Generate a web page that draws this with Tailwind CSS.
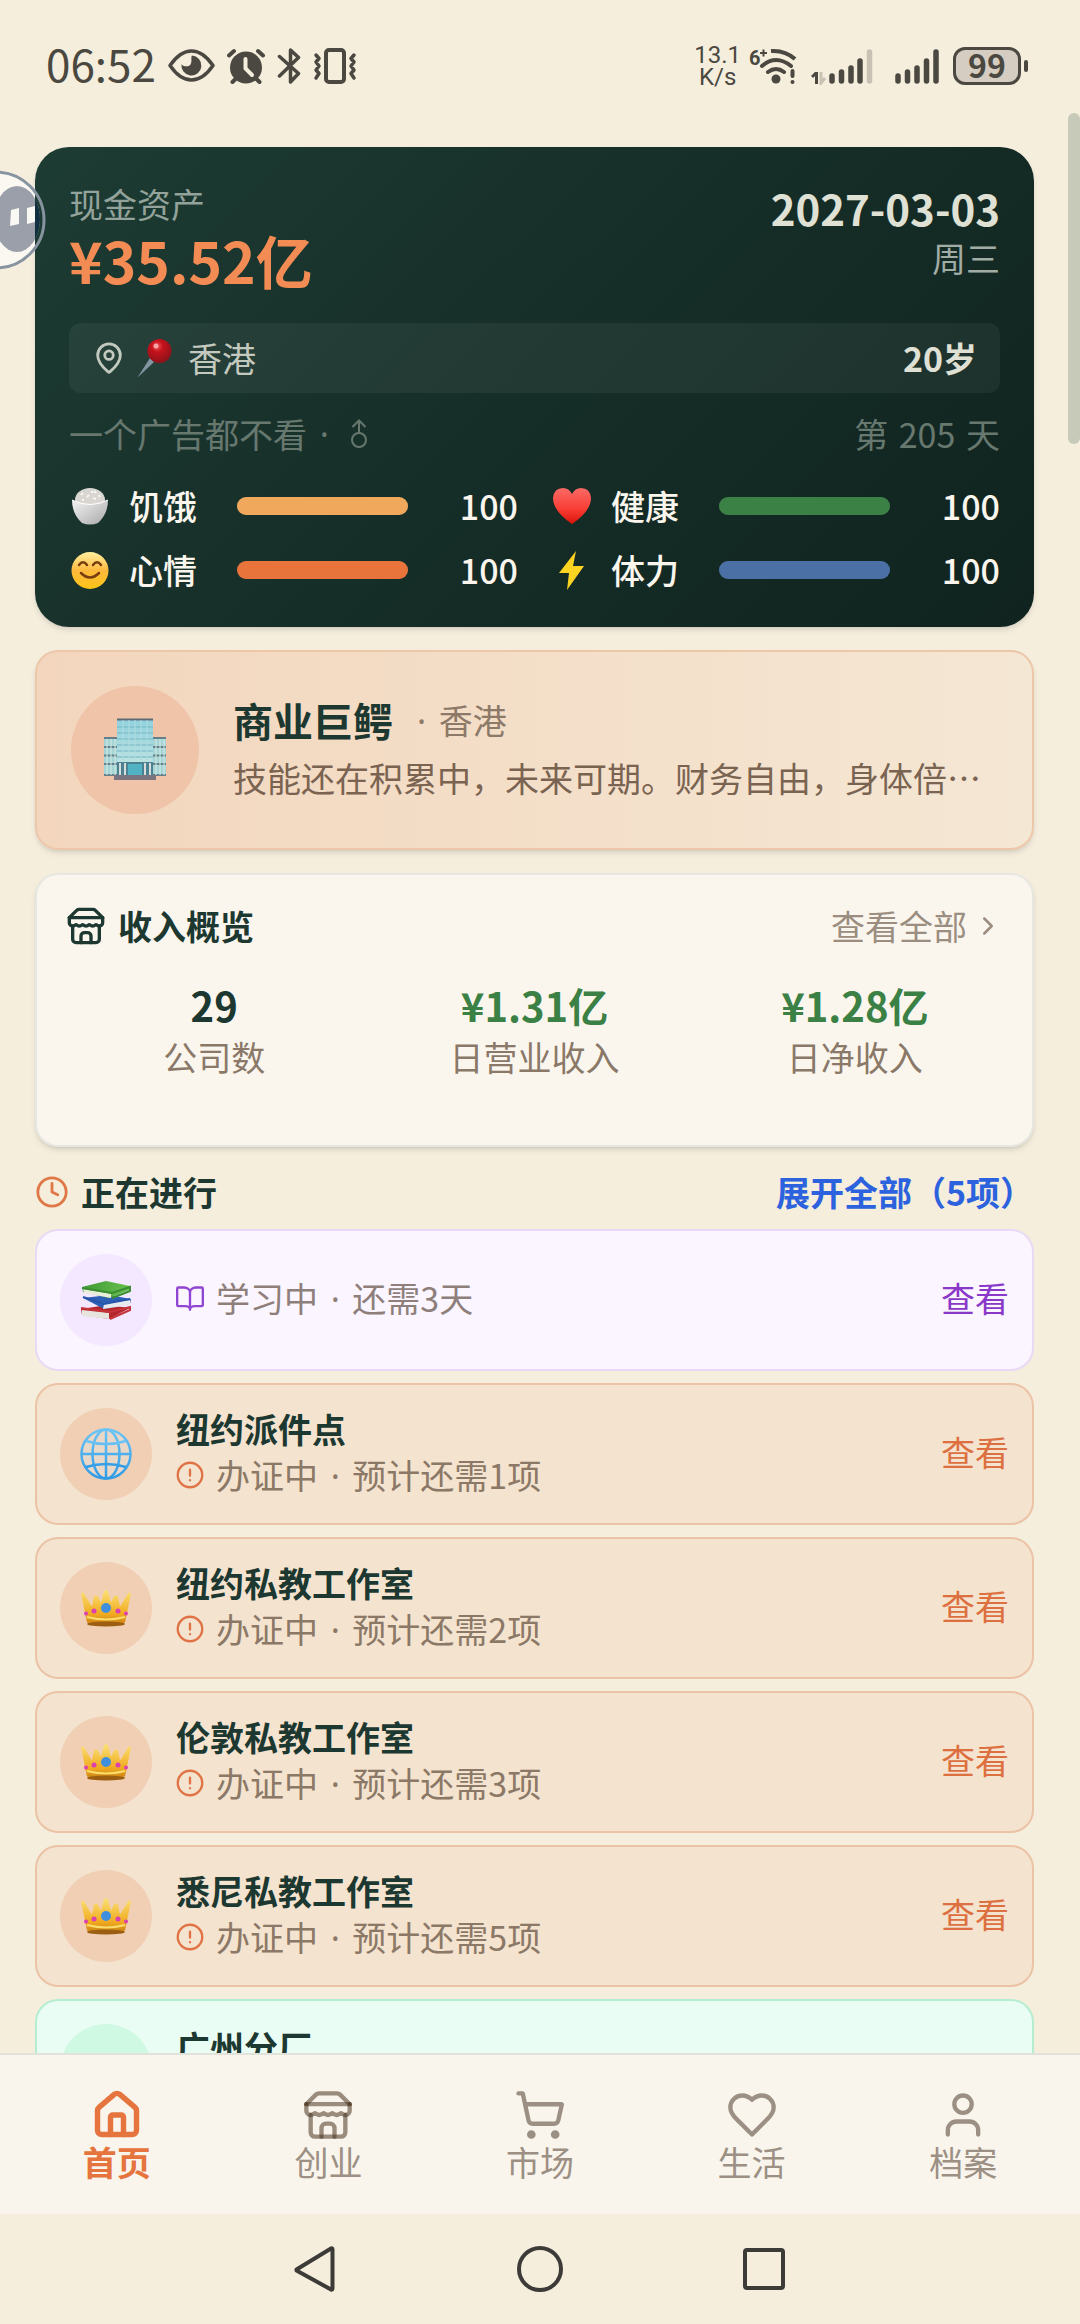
<!DOCTYPE html>
<html lang="zh-CN">
<head>
  <meta charset="UTF-8">
  <meta name="viewport" content="width=device-width, initial-scale=1.0">
  <title>首页</title>
  <script src="https://cdn.jsdelivr.net/npm/@tailwindcss/browser@4"></script>
</head>
<body class="bg-[#f5eedd] text-[#1c3830] font-['Noto_Sans_CJK_SC','Noto_Sans',sans-serif]">

<!-- Icon sprite -->
<svg class="absolute size-0" aria-hidden="true">
  <defs>
    <linearGradient id="gFace" x1="0" y1="0" x2="0" y2="1"><stop offset="0" stop-color="#fff0a0"/><stop offset=".5" stop-color="#fdb93c"/><stop offset="1" stop-color="#fcc417"/></linearGradient>
    <linearGradient id="gHeart" x1="0" y1="0" x2="0" y2="1"><stop offset="0" stop-color="#fb6a66"/><stop offset=".6" stop-color="#f83c33"/><stop offset="1" stop-color="#d8140c"/></linearGradient>
    <linearGradient id="gBowl" x1="0" y1="0" x2="1" y2="1"><stop offset="0" stop-color="#f4f4f4"/><stop offset="1" stop-color="#a8a8a8"/></linearGradient>
    <radialGradient id="gPin" cx=".4" cy=".3" r=".7"><stop offset="0" stop-color="#f0555a"/><stop offset=".35" stop-color="#c4121b"/><stop offset="1" stop-color="#8d1219"/></radialGradient>
    <linearGradient id="gGold" x1="0" y1="0" x2="0" y2="1"><stop offset="0" stop-color="#fbe276"/><stop offset=".7" stop-color="#f0a91e"/><stop offset="1" stop-color="#c67f14"/></linearGradient>
    <linearGradient id="gGlobe" x1="0" y1="0" x2="0" y2="1"><stop offset="0" stop-color="#6cc4f5"/><stop offset="1" stop-color="#2f9be6"/></linearGradient>
    <linearGradient id="gGlass" x1="0" y1="0" x2="0" y2="1"><stop offset="0" stop-color="#8fd0de"/><stop offset="1" stop-color="#c8e8e2"/></linearGradient>
    <linearGradient id="gGreen" x1="0" y1="0" x2="1" y2="0"><stop offset="0" stop-color="#3f9a35"/><stop offset="1" stop-color="#68c04c"/></linearGradient>
  </defs>
  <symbol id="i-store" viewBox="0 0 24 24"><path d="m2 7 4.41-4.41A2 2 0 0 1 7.83 2h8.34a2 2 0 0 1 1.42.59L22 7"/><path d="M4 12v8a2 2 0 0 0 2 2h12a2 2 0 0 0 2-2v-8"/><path d="M15 22v-4a2 2 0 0 0-2-2h-2a2 2 0 0 0-2 2v4"/><path d="M2 7h20"/><path d="M22 7v3a2 2 0 0 1-2 2a2.7 2.7 0 0 1-1.59-.63.7.7 0 0 0-.82 0A2.7 2.7 0 0 1 16 12a2.7 2.7 0 0 1-1.59-.63.7.7 0 0 0-.82 0A2.7 2.7 0 0 1 12 12a2.7 2.7 0 0 1-1.59-.63.7.7 0 0 0-.82 0A2.7 2.7 0 0 1 8 12a2.7 2.7 0 0 1-1.59-.63.7.7 0 0 0-.82 0A2.7 2.7 0 0 1 4 12a2 2 0 0 1-2-2V7"/></symbol>
  <symbol id="i-alert" viewBox="0 0 24 24"><circle cx="12" cy="12" r="10.5"/><path d="M12 7.5v5M12 16.5h.01"/></symbol>
  <symbol id="e-crown" viewBox="0 0 52 40">
    <path d="M1 5.500l6 29q19 5 38 0l6-29q-2-2-3 0l-8 13-2-10q-2-2-4 0l-3 6-3-11q-2-3-4 0l-3 11-3-6q-2-2-4 0l-2 10L4 5.500q-1-2-3 0z" fill="url(#gGold)"/>
    <ellipse cx="26" cy="36" rx="19" ry="2.500" fill="#9c5f12"/><path d="M7 29q19 5 38 0" fill="none" stroke="#fbdc6a" stroke-width="2"/>
    <circle cx="26" cy="20" r="5" fill="#3f8fdc"/><circle cx="14" cy="23" r="2.500" fill="#dc3fae"/><circle cx="38" cy="23" r="2.500" fill="#dc3fae"/><circle cx="6" cy="25.500" r="2" fill="#dc3fae"/><circle cx="46" cy="25.500" r="2" fill="#dc3fae"/>
  </symbol>
</svg>

<div class="relative flex h-screen flex-col overflow-hidden">

  <!-- Status bar -->
  <header class="flex h-[131px] shrink-0 items-center justify-between pr-[52px] pl-[46px] text-[#4a4840]">
    <div class="flex items-center gap-[12px]">
      <span class="pb-[6px] text-[44px] leading-[50px]">06:52</span>
      <svg class="h-[35px] w-[47px]" viewBox="0 0 47 35" fill="none" stroke="currentColor" stroke-width="3.500"><path d="M2 17.500Q12 3 23.500 3T45 17.500Q35 32 23.500 32T2 17.500z" stroke-linejoin="round"/><path d="M24 7.500a10 10 0 1 1-10.500 8.500c1 2.500 7 3.500 9 .5s0-7 1.500-9z" fill="currentColor" stroke="none"/></svg>
      <svg class="h-[36px] w-[38px]" viewBox="0 0 38 36" fill="currentColor"><circle cx="19" cy="19.500" r="16"/><path d="M2 7.500 7 3M36 7.500 31 3M5.500 34l4-4M32.500 34l-4-4" stroke="currentColor" stroke-width="4" stroke-linecap="round"/><path d="M18.500 11v9.500l6.500 6.500" fill="none" stroke="#f5eedd" stroke-width="4" stroke-linecap="round"/></svg>
      <svg class="h-[36px] w-[24px]" viewBox="0 0 24 36" fill="none" stroke="currentColor" stroke-width="3.500" stroke-linecap="round" stroke-linejoin="round"><path d="m2.500 8.500 19 17-8 8.500V2l8 7.500-19 18.500"/></svg>
      <svg class="h-[36px] w-[44px]" viewBox="0 0 44 36" fill="none" stroke="currentColor" stroke-width="3.500" stroke-linecap="round" stroke-linejoin="round"><rect x="13" y="2" width="18" height="32" rx="3" stroke-width="4"/><path d="m3 7 3 3.500-3 3.500 3 4-3 4 3 3.500L3 30M41 7l-3 3.500 3 3.500-3 4 3 4-3 3.500 3 4.500"/></svg>
    </div>
    <div class="flex items-center">
      <div class="mr-[8px] text-center font-['Roboto',sans-serif] text-[24px] leading-[22px]">13.1<br>K/s</div>
      <svg class="h-[38px] w-[49px]" viewBox="0 0 49 38" fill="none" stroke="currentColor" stroke-width="4" stroke-linecap="round"><text x="0" y="18" font-size="20" font-weight="700" font-family="Roboto, sans-serif" fill="currentColor" stroke="none">6</text><path d="M11 6h7M14.500 2.500v7" stroke-width="2" stroke-linecap="butt"/><path d="M22 4q14-1 24 8" stroke-linecap="butt"/><path d="M13 19q14-12 29 0M19 25q8-6 16 0"/><circle cx="27" cy="32" r="4.500" fill="currentColor" stroke="none"/><path d="M43.500 24v5M43.500 35v.01"/></svg>
      <svg class="ml-[13px] h-[38px] w-[62px]" viewBox="0 0 62 38" fill="none" stroke="currentColor" stroke-width="5.500" stroke-linecap="round"><path d="M21 29v5M30.500 25v9M40 21v13M49 14v20"/><path d="M58.500 5v29" stroke="#c9c1b4"/><path d="M5.500 25v12M1 30l4-4" stroke-width="3" stroke-linecap="butt"/><path d="M10 25v11l4-5" stroke="#c9c1b4" stroke-width="3" stroke-linecap="butt"/></svg>
      <svg class="ml-[22px] h-[38px] w-[44px]" viewBox="0 0 44 38" fill="none" stroke="currentColor" stroke-width="5.500" stroke-linecap="round"><path d="M3 29v5M12.500 25v9M22 21v13M31.500 14v20M41 5v29"/></svg>
      <div class="ml-[14px] flex h-[38px] w-[68px] items-center justify-center rounded-[12px] border-[3px] border-[#4a4840] bg-[#d5cdc1] pb-[4px] text-[32px] leading-[32px] font-bold">99</div>
      <div class="ml-[3px] h-[12px] w-[4px] rounded-full bg-[#4a4840]"></div>
    </div>
  </header>

  <main class="min-h-0 flex-1 overflow-hidden pt-[16px] pr-[46px] pl-[35px] text-[34px] leading-[46px]">

    <!-- Player card -->
    <section class="rounded-[34px] bg-linear-135 from-[#1d3c33] via-[#162e28] to-[#10231f] p-[34px] text-[#faf6ee] shadow-md">
      <div class="mb-[26px] flex justify-between">
        <div>
          <p class="text-[#93a29a]">现金资产</p>
          <p class="pb-[6px] text-[57px] leading-[64px] font-bold text-[#f28c54]">¥35.52亿</p>
        </div>
        <div class="text-right">
          <p class="text-[42px] leading-[54px] font-bold text-[#e0e1d5]">2027-03-03</p>
          <p class="text-[#a0aca4]">周三</p>
        </div>
      </div>
      <div class="flex items-center rounded-[12px] bg-white/5 px-[23px] py-[12px] text-[#c3c9bf]">
        <svg class="size-[34px]" viewBox="0 0 24 24" fill="none" stroke="currentColor" stroke-width="2" stroke-linecap="round" stroke-linejoin="round"><path d="M20 10c0 5-5.540 10.190-7.400 11.800a1 1 0 0 1-1.200 0C9.540 20.190 4 15 4 10a8 8 0 0 1 16 0"/><circle cx="12" cy="10" r="3"/></svg>
        <svg class="ml-[10px] h-[40px] w-[38px]" viewBox="0 0 38 40"><path d="M1.500 39.500 14 20l4 4z" fill="#8496a3"/><circle cx="23.500" cy="13" r="12" fill="url(#gPin)"/><circle cx="20" cy="8" r="2.500" fill="#f9a5a5"/></svg>
        <span class="ml-[14px]">香港</span>
        <span class="ml-auto font-bold text-[#e0e1d5]">20岁</span>
      </div>
      <div class="mt-[18px] flex items-center justify-between text-[#67786f]">
        <p class="flex items-center whitespace-pre">一个广告都不看 <span class="px-[5px] font-['Noto_Sans',sans-serif]">·</span><svg class="ml-[17px] h-[30px] w-[16px]" viewBox="0 0 16 30" fill="none" stroke="currentColor" stroke-width="2" role="img" aria-label="男"><circle cx="8" cy="21" r="7"/><path d="M8 14V1.500M1.500 8 8 1.500 14.500 8"/></svg></p>
        <p>第 <span class="px-[3px]">205</span> 天</p>
      </div>
      <div class="mt-[26px] grid grid-cols-2 gap-x-[33px] gap-y-[18px] font-medium">
        <div class="flex items-center gap-[12px]">
          <svg class="size-[40px]" viewBox="0 0 40 40"><ellipse cx="21" cy="14" rx="15" ry="12" fill="#d9d6d2"/><path d="m12 9 2-2m4 4 2-2m5-4 2 2m-3 5 3 1m3-4 1 2M13 14h2m7-8h2" stroke="#f7f6f4" stroke-width="2"/><path d="M3 14q18 9 36 0 0 14-10 23-8 3-16 0Q3 28 3 14z" fill="url(#gBowl)"/><path d="M3 14q18 9 36 0" fill="none" stroke="#fff"/></svg>
          <span class="ml-[8px] w-[96px]">饥饿</span>
          <div class="h-[18px] flex-1 rounded-full bg-white/10"><div class="h-full rounded-full bg-[#f0a95c]" style="width:100%"></div></div>
          <span class="w-[98px] text-right">100</span>
        </div>
        <div class="flex items-center gap-[12px]">
          <svg class="size-[40px]" viewBox="0 0 40 40"><path d="M21 38Q2 25 2 12 3 2 12 2q6 0 9 6 3-6 9-6 9 0 10 10 0 13-19 26z" fill="url(#gHeart)"/></svg>
          <span class="ml-[8px] w-[96px]">健康</span>
          <div class="h-[18px] flex-1 rounded-full bg-white/10"><div class="h-full rounded-full bg-[#3b8045]" style="width:100%"></div></div>
          <span class="w-[98px] text-right">100</span>
        </div>
        <div class="flex items-center gap-[12px]">
          <svg class="size-[40px]" viewBox="0 0 40 40"><circle cx="21" cy="20.500" r="18.500" fill="url(#gFace)"/><path d="M10 15q4-5.500 8 0M24 15q4-5.500 8 0M12 23q9 9 18 0" fill="none" stroke="#7a3d10" stroke-width="2.500" stroke-linecap="round"/></svg>
          <span class="ml-[8px] w-[96px]">心情</span>
          <div class="h-[18px] flex-1 rounded-full bg-white/10"><div class="h-full rounded-full bg-[#e9743b]" style="width:100%"></div></div>
          <span class="w-[98px] text-right">100</span>
        </div>
        <div class="flex items-center gap-[12px]">
          <svg class="size-[40px]" viewBox="0 0 40 40"><path d="M25 1 8 23h10l-2 17 17-24H22z" fill="#fdd321"/></svg>
          <span class="ml-[8px] w-[96px]">体力</span>
          <div class="h-[18px] flex-1 rounded-full bg-white/10"><div class="h-full rounded-full bg-[#4a70a6]" style="width:100%"></div></div>
          <span class="w-[98px] text-right">100</span>
        </div>
      </div>
    </section>

    <!-- Title card -->
    <section class="mt-[23px] flex items-center gap-[34px] rounded-[23px] border-2 border-[#edc7aa] bg-linear-to-r from-[#f3d6bd] to-[#f4e7d4] p-[34px] shadow-md">
      <div class="flex size-[128px] shrink-0 items-center justify-center rounded-full bg-[#efc4a8]">
        <svg class="size-[64px]" viewBox="0 0 64 64">
          <path d="M1 20h62v38H1z" fill="#a4d4d6"/><path d="M1 20h62M1 29h62M1 37.500h62M1 46h62M1 57h62" stroke="#65808a" stroke-width="2"/><path d="M4 21v36M8 21v36M12 21v36M53 21v36M57 21v36M61 21v36" stroke="#d6ece4"/>
          <path d="M14 1h36v56H14z" fill="url(#gGlass)"/><path d="M14 1.500h36" stroke="#5c6b75" stroke-width="2"/><path d="M14 9h36M14 15h36M14 21h36M14 27h36M14 33h36M14 39h36" stroke="#72b6c4"/><path d="M20 2v40M26 2v40M32 2v40M38 2v40M44 2v40" stroke="#b0dce0"/>
          <path d="M14 44h36v13H14z" fill="#4a8291"/><path d="M25 46h14v11H25z" fill="#51b2c3"/><path d="M17 45v12M22 45v12M42 45v12M47 45v12" stroke="#d8dcda" stroke-width="2"/><path d="M11 57h42v5H11z" fill="#7a7380"/>
        </svg>
      </div>
      <div class="flex-1 pb-[8px]">
        <h1 class="flex items-center gap-[24px] text-[40px] leading-[57px] font-bold">商业巨鳄 <span class="text-[34px] leading-[46px] font-normal text-[#8d7967]"><span class="pr-[5px] font-['Noto_Sans',sans-serif]">·</span> 香港</span></h1>
        <p class="mt-[6px] whitespace-nowrap text-[#7a6351]">技能还在积累中，未来可期。财务自由，身体倍…</p>
      </div>
    </section>

    <!-- Income overview -->
    <section class="mt-[23px] rounded-[23px] border-2 border-[#e7e7e1] bg-[#faf6ee] p-[29px] shadow-md">
      <div class="mb-[29px] flex h-[44px] items-center justify-between">
        <h2 class="flex items-center gap-[12px] font-bold"><svg class="size-[40px]" fill="none" stroke="currentColor" stroke-width="2" stroke-linecap="round" stroke-linejoin="round"><use href="#i-store"/></svg>收入概览</h2>
        <a href="#" class="flex items-center gap-[6px] text-[#9b8d80]">查看全部<svg class="size-[30px]" viewBox="0 0 24 24" fill="none" stroke="currentColor" stroke-width="2" stroke-linecap="round" stroke-linejoin="round"><path d="m9 18 6-6-6-6"/></svg></a>
      </div>
      <div class="mb-[36px] grid grid-cols-3 gap-[24px] text-center text-[#8a7868]">
        <div><p class="text-[40px] leading-[57px] font-bold text-[#1c3830]">29</p><p>公司数</p></div>
        <div><p class="text-[40px] leading-[57px] font-bold text-[#3b8045]">¥1.31亿</p><p>日营业收入</p></div>
        <div><p class="text-[40px] leading-[57px] font-bold text-[#3b8045]">¥1.28亿</p><p>日净收入</p></div>
      </div>
    </section>

    <!-- In progress -->
    <div class="mt-[22px] mb-[14px] flex items-center justify-between">
      <h2 class="flex items-center gap-[12px] font-bold"><svg class="size-[34px] text-[#df7747]" viewBox="0 0 24 24" fill="none" stroke="currentColor" stroke-width="2" stroke-linecap="round" stroke-linejoin="round"><circle cx="12" cy="12" r="10"/><path d="M12 6v6l4 2"/></svg>正在进行</h2>
      <button type="button" class="font-bold text-[#2c62dd]">展开全部（5项）</button>
    </div>

    <div class="flex flex-col gap-[12px]">
      <div class="flex items-center gap-[24px] rounded-[23px] border-2 border-[#e8daf5] bg-[#faf5ff] p-[23px]">
        <div class="flex size-[92px] items-center justify-center rounded-full bg-[#f3e8ff]">
          <svg class="h-[40px] w-[52px]" viewBox="0 0 52 40">
            <path d="m1 29 26-4 23 3-21 11L2 35z" fill="#b5262c"/><path d="m2 30 27 3v6L2 36z" fill="#e6e4dd"/><path d="M1 28l29 4 20-5v3l-20 9" fill="none" stroke="#c5343a" stroke-width="2"/>
            <path d="m3 18 26-3 22 4-1 5-26 5z" fill="#2d5fb5"/><path d="m24 24 26-4v5l-27 4z" fill="#e6e9ee"/><path d="M3 17l21 7 26-5" fill="none" stroke="#2656aa" stroke-width="2"/>
            <path d="M2 7 26 1l24 5-1 4-20 8L3 12z" fill="url(#gGreen)"/><path d="m3 9 28 5v4L4 13z" fill="#e9eddc"/><path d="m2 8 30 5 18-6v4l-18 7" fill="none" stroke="#3c8e32" stroke-width="2"/>
          </svg>
        </div>
        <p class="flex flex-1 items-center gap-[12px] pb-[4px] text-[#8f7f7b]"><svg class="size-[28px] text-[#9045d2]" viewBox="0 0 24 24" fill="none" stroke="currentColor" stroke-width="2" stroke-linecap="round" stroke-linejoin="round"><path d="M12 6v16M2 3h5a5 4 0 0 1 5 4 5 4 0 0 1 5-4h5a1 1 0 0 1 1 1v14a1 1 0 0 1-1 1h-6a4 3 0 0 0-4 3 4 3 0 0 0-4-3H2a1 1 0 0 1-1-1V4a1 1 0 0 1 1-1z"/></svg><span>学习中 <span class="px-[5px] font-['Noto_Sans',sans-serif]">·</span> 还需3天</span></p>
        <button type="button" class="pb-[4px] text-[#8a38c8]">查看</button>
      </div>

      <div class="flex items-center gap-[24px] rounded-[23px] border-2 border-[#ebc3a6] bg-[#f4e3cf] p-[23px]">
        <div class="flex size-[92px] items-center justify-center rounded-full bg-[#f1cfb5]">
          <svg class="size-[52px]" viewBox="0 0 52 52" fill="none" stroke="url(#gGlobe)" stroke-width="2.500"><circle cx="26" cy="26" r="24.500" fill="#dfe7e6" fill-opacity=".4"/><ellipse cx="26" cy="26" rx="13.500" ry="24.500"/><path d="M25.500 2h1v48h-1zM2 25.500h48v1H2z" stroke-width="1.500"/><path d="M6 13q20 6 40 0M6 39q20-6 40 0"/></svg>
        </div>
        <div class="-my-[4px] flex-1 pb-[4px]">
          <h3 class="font-bold">纽约派件点</h3>
          <p class="flex items-center gap-[12px] text-[#8b7866]"><svg class="size-[28px] text-[#e07345]" fill="none" stroke="currentColor" stroke-width="2" stroke-linecap="round"><use href="#i-alert"/></svg><span>办证中 <span class="px-[5px] font-['Noto_Sans',sans-serif]">·</span> 预计还需1项</span></p>
        </div>
        <button type="button" class="pb-[4px] text-[#dd7040]">查看</button>
      </div>

      <div class="flex items-center gap-[24px] rounded-[23px] border-2 border-[#ebc3a6] bg-[#f4e3cf] p-[23px]">
        <div class="flex size-[92px] items-center justify-center rounded-full bg-[#f1cfb5]"><svg class="h-[40px] w-[52px]"><use href="#e-crown"/></svg></div>
        <div class="-my-[4px] flex-1 pb-[4px]">
          <h3 class="font-bold">纽约私教工作室</h3>
          <p class="flex items-center gap-[12px] text-[#8b7866]"><svg class="size-[28px] text-[#e07345]" fill="none" stroke="currentColor" stroke-width="2" stroke-linecap="round"><use href="#i-alert"/></svg><span>办证中 <span class="px-[5px] font-['Noto_Sans',sans-serif]">·</span> 预计还需2项</span></p>
        </div>
        <button type="button" class="pb-[4px] text-[#dd7040]">查看</button>
      </div>

      <div class="flex items-center gap-[24px] rounded-[23px] border-2 border-[#ebc3a6] bg-[#f4e3cf] p-[23px]">
        <div class="flex size-[92px] items-center justify-center rounded-full bg-[#f1cfb5]"><svg class="h-[40px] w-[52px]"><use href="#e-crown"/></svg></div>
        <div class="-my-[4px] flex-1 pb-[4px]">
          <h3 class="font-bold">伦敦私教工作室</h3>
          <p class="flex items-center gap-[12px] text-[#8b7866]"><svg class="size-[28px] text-[#e07345]" fill="none" stroke="currentColor" stroke-width="2" stroke-linecap="round"><use href="#i-alert"/></svg><span>办证中 <span class="px-[5px] font-['Noto_Sans',sans-serif]">·</span> 预计还需3项</span></p>
        </div>
        <button type="button" class="pb-[4px] text-[#dd7040]">查看</button>
      </div>

      <div class="flex items-center gap-[24px] rounded-[23px] border-2 border-[#ebc3a6] bg-[#f4e3cf] p-[23px]">
        <div class="flex size-[92px] items-center justify-center rounded-full bg-[#f1cfb5]"><svg class="h-[40px] w-[52px]"><use href="#e-crown"/></svg></div>
        <div class="-my-[4px] flex-1 pb-[4px]">
          <h3 class="font-bold">悉尼私教工作室</h3>
          <p class="flex items-center gap-[12px] text-[#8b7866]"><svg class="size-[28px] text-[#e07345]" fill="none" stroke="currentColor" stroke-width="2" stroke-linecap="round"><use href="#i-alert"/></svg><span>办证中 <span class="px-[5px] font-['Noto_Sans',sans-serif]">·</span> 预计还需5项</span></p>
        </div>
        <button type="button" class="pb-[4px] text-[#dd7040]">查看</button>
      </div>

      <div class="flex items-start gap-[24px] rounded-[23px] border-2 border-[#b4edd0] bg-[#eafdf5] p-[23px]">
        <div class="size-[92px] rounded-full bg-[#d0f9e4]"></div>
        <h3 class="font-bold">广州分厂</h3>
      </div>
    </div>
  </main>

  <!-- Tab bar -->
  <nav class="grid h-[161px] shrink-0 grid-cols-5 border-t-2 border-[#e1e2da] bg-[#f9f5ed] px-[11px] pt-[34px] text-[34px] leading-[42px] text-[#9c8f83]">
    <a href="#" class="flex flex-col items-center font-bold text-[#e5743e]"><svg class="size-[52px]" viewBox="0 0 24 24" fill="none" stroke="currentColor" stroke-width="2.500" stroke-linecap="round" stroke-linejoin="round"><path d="M15 21v-8a1 1 0 0 0-1-1h-4a1 1 0 0 0-1 1v8"/><path d="M3 10a2 2 0 0 1 .709-1.528l7-5.999a2 2 0 0 1 2.582 0l7 5.999A2 2 0 0 1 21 10v9a2 2 0 0 1-2 2H5a2 2 0 0 1-2-2z"/></svg>首页</a>
    <a href="#" class="flex flex-col items-center"><svg class="size-[52px] text-[#4b3420]/55" fill="none" stroke="currentColor" stroke-width="2" stroke-linecap="round" stroke-linejoin="round"><use href="#i-store"/></svg>创业</a>
    <a href="#" class="flex flex-col items-center"><svg class="size-[52px]" viewBox="0 0 24 24" fill="none" stroke="currentColor" stroke-width="2" stroke-linecap="round" stroke-linejoin="round"><circle cx="8" cy="21" r="1"/><circle cx="19" cy="21" r="1"/><path d="M2.050 2.050h2l2.660 12.420a2 2 0 0 0 2 1.580h9.780a2 2 0 0 0 1.950-1.570l1.650-7.430H5.120"/></svg>市场</a>
    <a href="#" class="flex flex-col items-center"><svg class="size-[52px]" viewBox="0 0 24 24" fill="none" stroke="currentColor" stroke-width="2" stroke-linecap="round" stroke-linejoin="round"><path d="M19 14c1.490-1.460 3-3.210 3-5.500A5.500 5.500 0 0 0 16.500 3c-1.760 0-3 .5-4.500 2-1.500-1.500-2.740-2-4.500-2A5.500 5.500 0 0 0 2 8.500c0 2.300 1.500 4.050 3 5.500l7 7Z"/></svg>生活</a>
    <a href="#" class="flex flex-col items-center"><svg class="size-[52px]" viewBox="0 0 24 24" fill="none" stroke="currentColor" stroke-width="2" stroke-linecap="round" stroke-linejoin="round"><path d="M19 21v-2a4 4 0 0 0-4-4H9a4 4 0 0 0-4 4v2"/><circle cx="12" cy="7" r="4"/></svg>档案</a>
  </nav>

  <!-- System navigation -->
  <footer class="flex h-[110px] shrink-0 items-center justify-center gap-[178px] text-[#3c3b38]">
    <button type="button" aria-label="返回"><svg class="size-[46px]" viewBox="0 0 46 46" fill="none" stroke="currentColor" stroke-width="4" stroke-linejoin="round"><path d="M3.500 23.500 38 2.500q1.500-.5 1.500 1v39q0 1.500-1.500 1L3.500 24.500z"/></svg></button>
    <button type="button" aria-label="主屏幕"><svg class="size-[46px]" viewBox="0 0 46 46" fill="none" stroke="currentColor" stroke-width="4"><circle cx="23" cy="23" r="21"/></svg></button>
    <button type="button" aria-label="最近任务"><svg class="size-[46px]" viewBox="0 0 46 46" fill="none" stroke="currentColor" stroke-width="4"><rect x="4" y="4" width="38" height="38" rx="2"/></svg></button>
  </footer>

  <!-- Scroll thumb -->
  <div class="absolute top-[113px] right-0 h-[331px] w-[12px] rounded-full bg-[#c8cab9]"></div>

  <!-- Floating assistant -->
  <svg class="absolute top-[170px] left-0 h-[100px] w-[48px]" viewBox="0 0 48 100">
    <path d="M0 1.500a49 49 0 0 1 35 18v61a49 49 0 0 1-35 18z" fill="#fbf8f1"/>
    <ellipse cx="17" cy="49" rx="23" ry="33" fill="#9a9faa"/><path d="M35 28q10 21 0 42z" fill="#10303f"/>
    <path d="m11 40 8-2v16l-9 2zM27 38l8-2v16l-8 2z" fill="#faf8f3"/>
    <circle cx="-4" cy="50" r="48" fill="none" stroke="#8794a0" stroke-width="3"/>
  </svg>
</div>
</body>
</html>
